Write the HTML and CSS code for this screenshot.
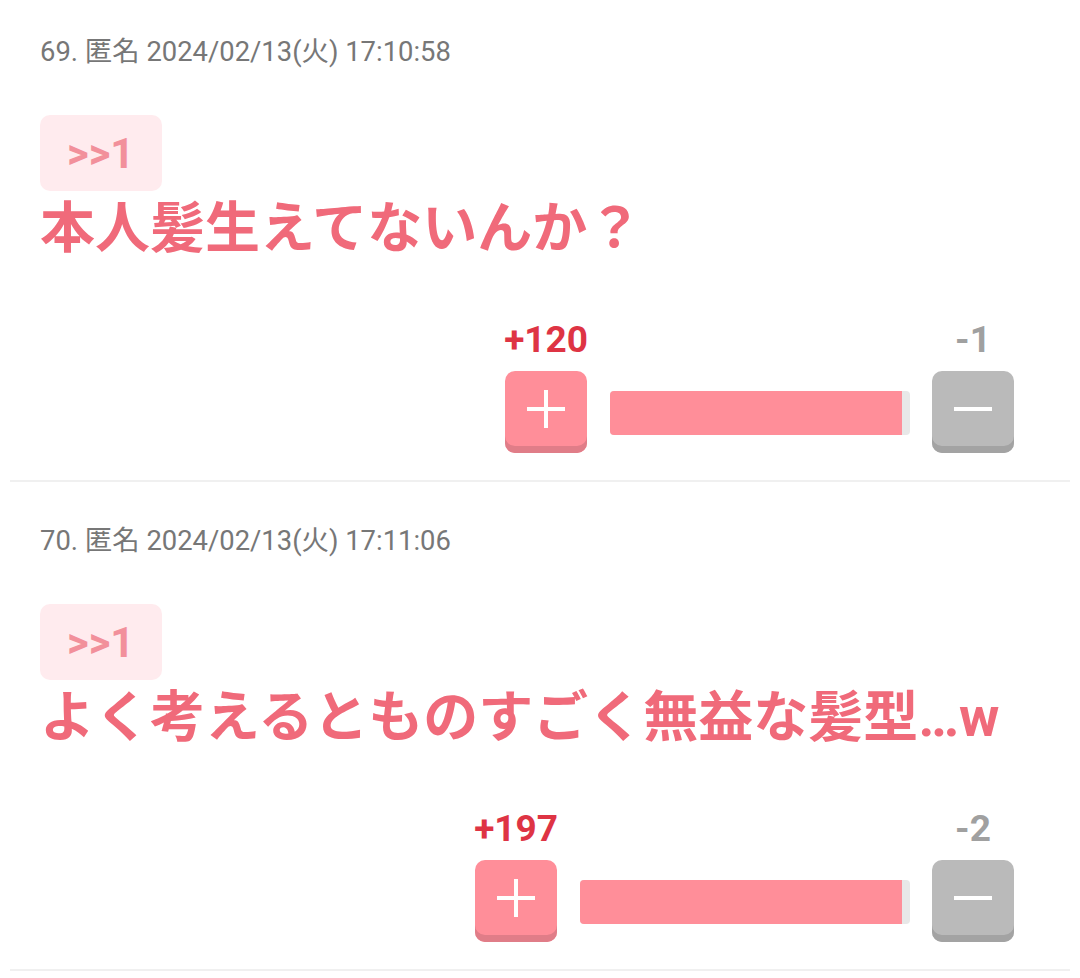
FILE: index.html
```html
<!DOCTYPE html>
<html lang="ja">
<head>
    <meta charset="UTF-8">
    <meta name="viewport" content="width=device-width, initial-scale=1.0">
    <title>レス一覧</title>
    <link rel="stylesheet" href="styles.css">
</head>
<body>
    <div class="thread">
        <!-- res 69 -->
        <article class="res">
            <div class="res-meta">69. 匿名 2024/02/13(火) 17:10:58</div>
            <span class="anchor">&gt;&gt;1</span>
            <p class="res-text">本人髪生えてないんか？</p>
            <div class="vote">
                <div class="vote-col">
                    <span class="vote-count plus">+120</span>
                    <button class="vote-btn plus" aria-label="plus">
                        <svg viewBox="0 0 40 40" width="40" height="40"><path d="M20 1v38M1 20h38" stroke="#fff" stroke-width="4"/></svg>
                    </button>
                </div>
                <div class="vote-bar" style="width: 300px"><div class="vote-fill" style="width: 97.3%"></div></div>
                <div class="vote-col">
                    <span class="vote-count minus">-1</span>
                    <button class="vote-btn minus" aria-label="minus">
                        <svg viewBox="0 0 40 40" width="40" height="40"><path d="M1 20h38" stroke="#fff" stroke-width="4"/></svg>
                    </button>
                </div>
            </div>
        </article>

        <!-- res 70 -->
        <article class="res">
            <div class="res-meta">70. 匿名 2024/02/13(火) 17:11:06</div>
            <span class="anchor">&gt;&gt;1</span>
            <p class="res-text">よく考えるとものすごく無益な髪型…w</p>
            <div class="vote">
                <div class="vote-col">
                    <span class="vote-count plus">+197</span>
                    <button class="vote-btn plus" aria-label="plus">
                        <svg viewBox="0 0 40 40" width="40" height="40"><path d="M20 1v38M1 20h38" stroke="#fff" stroke-width="4"/></svg>
                    </button>
                </div>
                <div class="vote-bar" style="width: 330px"><div class="vote-fill" style="width: 97.6%"></div></div>
                <div class="vote-col">
                    <span class="vote-count minus">-2</span>
                    <button class="vote-btn minus" aria-label="minus">
                        <svg viewBox="0 0 40 40" width="40" height="40"><path d="M1 20h38" stroke="#fff" stroke-width="4"/></svg>
                    </button>
                </div>
            </div>
        </article>
    </div>
</body>
</html>
```

FILE: styles.css
```css
body {
    margin: 0;
    background-color: #ffffff;
    font-family: Roboto, "Noto Sans CJK JP", sans-serif;
    overflow: hidden;
}
.thread {
    margin: -7px 10px 0;
}
.res {
    display: flex;
    flex-direction: column;
    align-items: flex-start;
    padding: 43px 56px 27px 30px;
    border-bottom: 2px solid #f0f0f0;
}
.res-meta {
    font-size: 27.4px;
    line-height: 32px;
    color: #777777;
}
.anchor {
    display: block;
    margin-top: 47px;
    height: 76px;
    padding: 0 28px 0 27px;
    line-height: 78px;
    font-size: 42px;
    font-weight: 700;
    color: #f2909b;
    background-color: #ffebee;
    border-radius: 10px;
}
.res-text {
    margin: 5px 0 0;
    font-family: Roboto, "Noto Sans CJK JP", sans-serif;
    font-size: 55px;
    line-height: 64px;
    font-weight: 700;
    color: #f06a7a;
    white-space: nowrap;
}
.vote {
    align-self: flex-end;
    display: flex;
    align-items: flex-end;
    gap: 22px;
    margin-top: 60px;
}
.vote-col {
    display: flex;
    flex-direction: column;
    align-items: center;
    gap: 11px;
}
.vote-count {
    font-size: 37px;
    line-height: 40px;
    font-weight: 700;
}
.vote-count.plus {
    color: #de3444;
}
.vote-count.minus {
    color: #a0a0a0;
}
.vote-btn {
    display: flex;
    align-items: center;
    justify-content: center;
    width: 82px;
    height: 82px;
    padding: 0 0 7px;
    border: none;
    border-radius: 10px;
    cursor: pointer;
}
.vote-btn.plus {
    background-color: #ff8e99;
    box-shadow: inset 0 -7px 0 #e07d88;
}
.vote-btn.minus {
    background-color: #bababa;
    box-shadow: inset 0 -7px 0 #a3a3a3;
}
.vote-bar {
    height: 44px;
    margin-bottom: 18px;
    background-color: #e8e8e8;
    border-radius: 4px;
    overflow: hidden;
}
.vote-fill {
    height: 100%;
    background-color: #ff8e99;
}
```
